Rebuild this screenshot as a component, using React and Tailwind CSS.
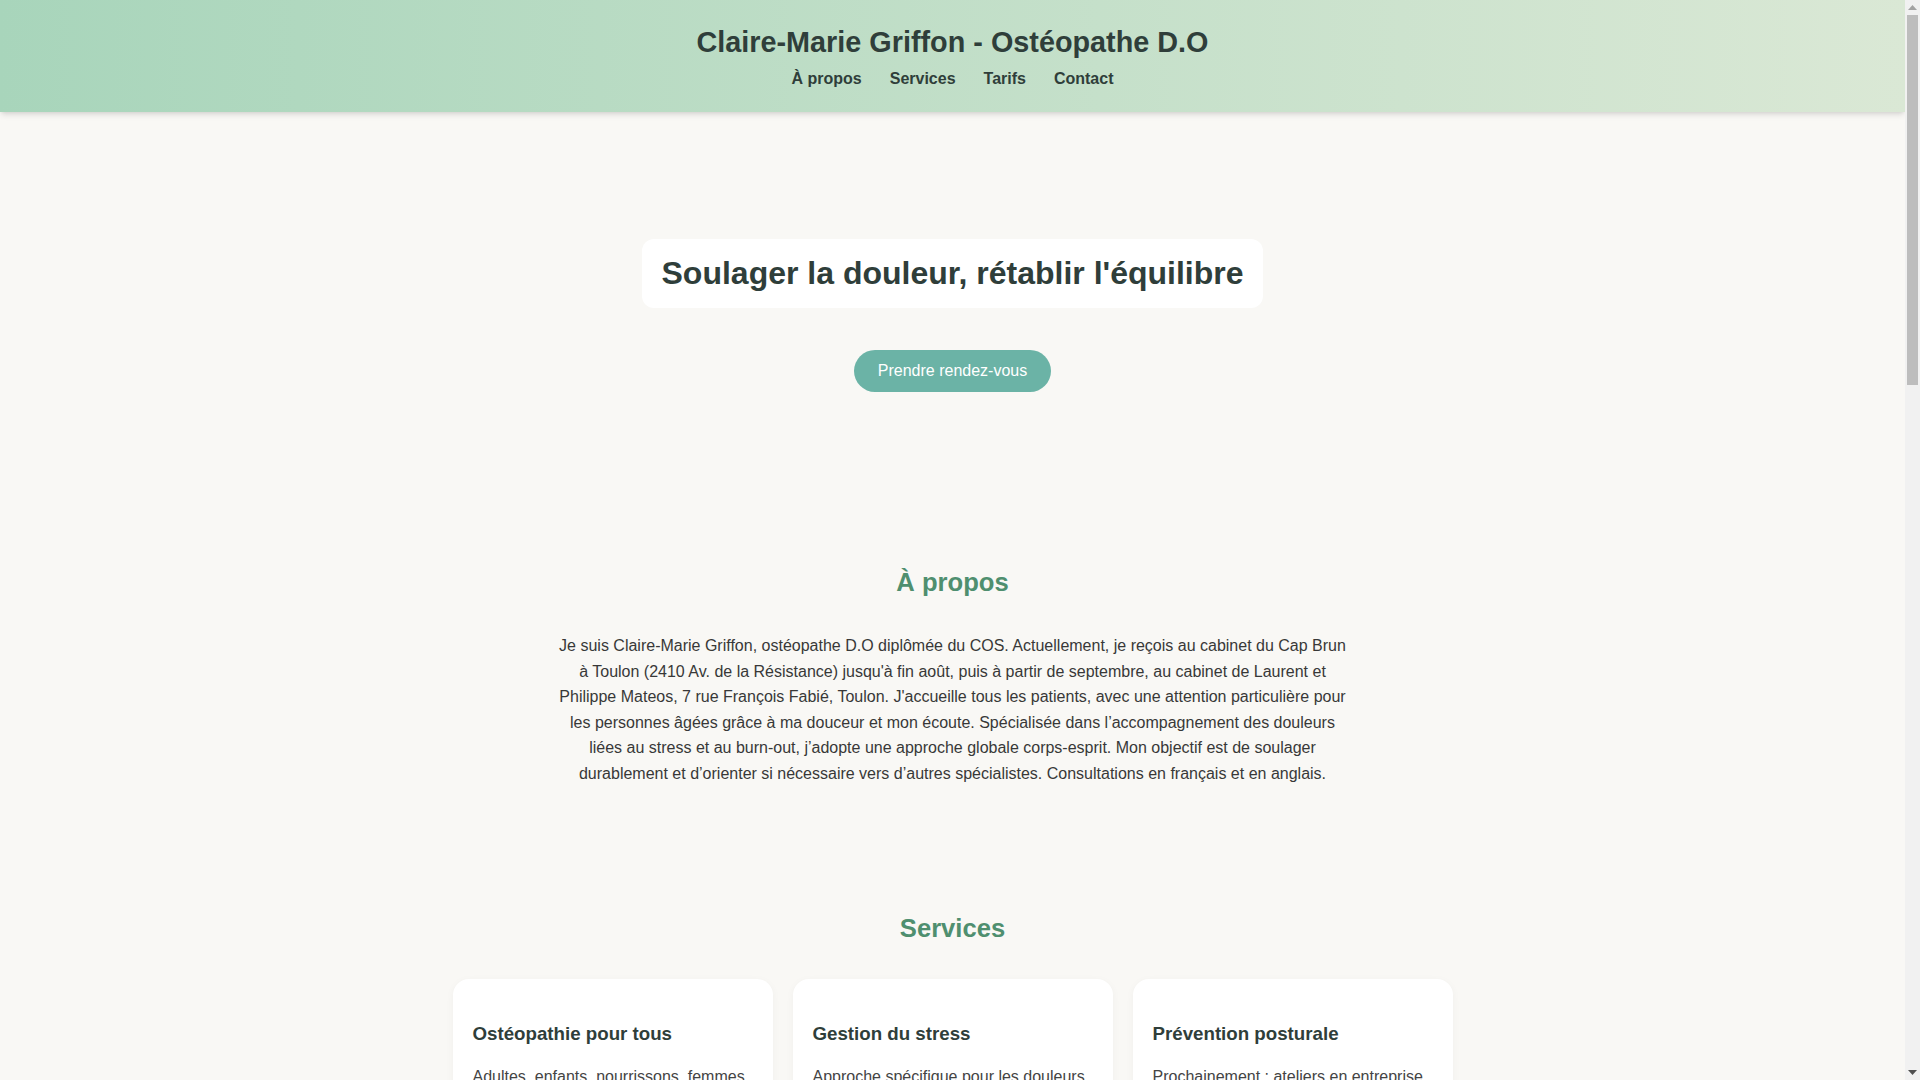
import React from 'react';

const NAV = ['À propos', 'Services', 'Tarifs', 'Contact'];

const SERVICES = [
    {
        title: 'Ostéopathie pour tous',
        text: 'Adultes, enfants, nourrissons, femmes enceintes, sportifs et personnes âgées : une prise en charge douce et adaptée à chacun.',
    },
    {
        title: 'Gestion du stress',
        text: 'Approche spécifique pour les douleurs liées au stress, à l’anxiété et au burn-out, en lien avec une vision globale corps-esprit.',
    },
    {
        title: 'Prévention posturale',
        text: 'Prochainement : ateliers en entreprise pour prévenir les troubles musculo-squelettiques et les mauvaises postures.',
    },
];

const TARIFS = [
    { label: 'Consultation adulte', price: '60 €' },
    { label: 'Consultation enfant / nourrisson', price: '50 €' },
    { label: 'Consultation à domicile', price: '70 €' },
];

function ScrollBar() {
    return (
        <aside className="w-[15px] h-screen bg-[#f1f1f1] flex flex-col shrink-0">
            <div className="h-[15px] flex items-center justify-center">
                <svg width="9" height="5" viewBox="0 0 9 5"><path d="M0 5 L4.5 0 L9 5 Z" fill="#a3a3a3" /></svg>
            </div>
            <div className="mx-[2px] h-[370px] bg-[#bdbdbd]" />
            <div className="flex-1" />
            <div className="h-[15px] flex items-center justify-center">
                <svg width="9" height="5" viewBox="0 0 9 5"><path d="M0 0 L9 0 L4.5 5 Z" fill="#505050" /></svg>
            </div>
        </aside>
    );
}

export default function App() {
    return (
        <div className="flex h-screen overflow-hidden bg-[#f9f8f5] text-[#333] font-['Liberation_Sans',Arial,sans-serif]">
            <div className="flex-1 min-w-0 h-screen overflow-hidden">

                {/* Header */}
                <header className="pt-[26px] pb-[24px] text-center bg-gradient-to-r from-[#a8d5bb] to-[#dae8d5] shadow-md text-[#2f3e3a]">
                    <h1 className="text-[28.8px] font-bold leading-[normal] mb-[11px]">Claire-Marie Griffon - Ostéopathe D.O</h1>
                    <nav className="flex justify-center gap-7">
                        {NAV.map((item) => (
                            <a key={item} href="#" className="text-base font-bold leading-[normal] text-[#2f3e3a]">
                                {item}
                            </a>
                        ))}
                    </nav>
                </header>

                {/* Hero */}
                <section className="pt-[127px] flex flex-col items-center">
                    <h2 className="bg-white rounded-xl px-5 py-4 text-[32px] font-bold leading-[normal] text-[#2f3e3a]">
                        Soulager la douleur, rétablir l'équilibre
                    </h2>
                    <a href="#" className="mt-[42px] bg-[#6bb3a6] text-white text-base leading-[normal] px-6 py-3 rounded-full">
                        Prendre rendez-vous
                    </a>
                </section>

                {/* A propos */}
                <section className="pt-[176px] text-center">
                    <h2 className="text-[25.6px] font-bold leading-[normal] text-[#4f8f6f]">À propos</h2>
                    <p className="max-w-[790px] mx-auto mt-9 text-base leading-[1.6] text-[#383838]">
                        Je suis Claire-Marie Griffon, ostéopathe D.O diplômée du COS. Actuellement, je reçois au cabinet du Cap Brun à Toulon (2410 Av. de la Résistance) jusqu'à fin août, puis à partir de septembre, au cabinet de Laurent et Philippe Mateos, 7 rue François Fabié, Toulon. J'accueille tous les patients, avec une attention particulière pour les personnes âgées grâce à ma douceur et mon écoute. Spécialisée dans l’accompagnement des douleurs liées au stress et au burn-out, j’adopte une approche globale corps-esprit. Mon objectif est de soulager durablement et d’orienter si nécessaire vers d’autres spécialistes. Consultations en français et en anglais.
                    </p>
                </section>

                {/* Services */}
                <section className="pt-[127px] text-center">
                    <h2 className="text-[25.6px] font-bold leading-[normal] text-[#4f8f6f]">Services</h2>
                    <div className="max-w-[1000px] mx-auto mt-9 grid grid-cols-3 gap-5 text-left">
                        {SERVICES.map((s) => (
                            <div key={s.title} className="bg-white rounded-2xl shadow-[0_2px_8px_rgba(0,0,0,0.04)] pt-[26px] pb-6 px-5">
                                <h3 className="text-[18.72px] font-bold leading-[normal] my-[18.72px] text-[#2f3e3a]">{s.title}</h3>
                                <p className="text-base leading-[1.6] text-[#444]">{s.text}</p>
                            </div>
                        ))}
                    </div>
                </section>

                {/* Tarifs */}
                <section className="pt-32 text-center">
                    <h2 className="text-[25.6px] font-bold leading-[normal] text-[#4f8f6f]">Tarifs</h2>
                    <ul className="max-w-[600px] mx-auto mt-9 flex flex-col gap-3">
                        {TARIFS.map((t) => (
                            <li key={t.label} className="flex justify-between bg-white rounded-xl px-5 py-3 text-base">
                                <span>{t.label}</span>
                                <span className="font-bold text-[#2f3e3a]">{t.price}</span>
                            </li>
                        ))}
                    </ul>
                </section>

                {/* Contact */}
                <section className="pt-32 pb-32 text-center">
                    <h2 className="text-[25.6px] font-bold leading-[normal] text-[#4f8f6f]">Contact</h2>
                    <p className="mt-9 text-base leading-[1.6]">Sur rendez-vous uniquement, par téléphone ou via Doctolib.</p>
                </section>
            </div>
            <ScrollBar />
        </div>
    );
}
